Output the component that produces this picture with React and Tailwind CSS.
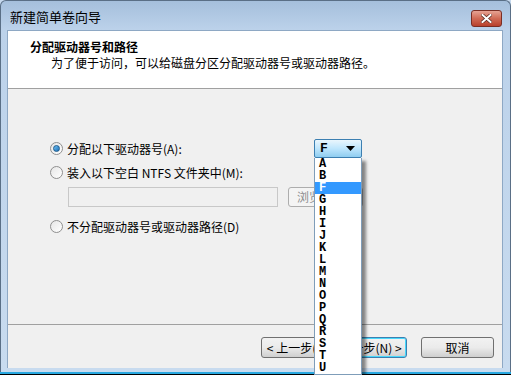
const letters = ["A", "B", "F", "G", "H", "I", "J", "K", "L", "M", "N", "O", "P", "Q", "R", "S", "T", "U"];

function Radio({ checked }) {
    return (
        <span className="relative flex h-[13px] w-[13px] items-center justify-center rounded-full border border-[#8f8f8f] bg-gradient-to-br from-[#e6e6e6] to-[#ffffff]">
            {checked && (
                <span className="h-[7px] w-[7px] rounded-full border border-[#1d5a8a] bg-gradient-to-br from-[#6cc0f5] to-[#1a6fb5]" />
            )}
        </span>
    );
}

function Button({ children, primary, className = "" }) {
    return (
        <div
            className={`flex h-[21px] w-[73px] items-center justify-center rounded-[3px] border bg-gradient-to-b from-[#f2f2f2] via-[#ebebeb] to-[#cfcfcf] text-[12px] text-black ${
                primary ? "border-[#3c7fb1] shadow-[inset_0_0_0_1px_#48d8fb]" : "border-[#707070]"
            } ${className}`}
        >
            {children}
        </div>
    );
}

export default function App() {
    return (
        <div
            className="flex h-[375px] w-[511px] flex-col overflow-hidden bg-[#c6d9ee] text-[12px] text-black"
            style={{ fontFamily: '"Noto Sans CJK SC", "Liberation Sans", sans-serif' }}
        >
            {/* title bar */}
            <div className="flex h-[30px] items-start justify-between rounded-t-[6px] border border-b-0 border-[#5a6f86] bg-gradient-to-b from-[#a5bfdc] to-[#bcd2ea] pl-[9px] pr-[8px]">
                <span className="mt-[8px] text-[13px] leading-[16px] text-black">新建简单卷向导</span>
                <div className="mt-[9px] flex h-[17px] w-[31px] items-center justify-center rounded-[3px] border border-[#7a2e24] bg-gradient-to-b from-[#e6a394] via-[#d06a55] to-[#b8402c]">
                    <svg width="11" height="9" viewBox="0 0 11 9">
                        <path d="M1.5 1 L9.5 8 M9.5 1 L1.5 8" stroke="#5a2a22" strokeWidth="3.4" strokeLinecap="square" />
                        <path d="M1.5 1 L9.5 8 M9.5 1 L1.5 8" stroke="#ffffff" strokeWidth="2" strokeLinecap="square" />
                    </svg>
                </div>
            </div>

            <div className="flex flex-1 border-l border-r border-[#5a6f86]">
                <div className="w-[6px] bg-gradient-to-b from-[#bcd2ea] to-[#c8dbef]" />
                <div className="flex flex-1 flex-col border border-b-0 border-[#8ea8c4]">
                    {/* header */}
                    <div className="h-[58px] border-b border-[#a0a0a0] bg-white pl-[22px] pt-[8px]">
                        <div className="text-[12px] font-bold leading-[16px]">分配驱动器号和路径</div>
                        <div className="pl-[21px] text-[12px] leading-[16px]">为了便于访问，可以给磁盘分区分配驱动器号或驱动器路径。</div>
                    </div>

                    {/* body */}
                    <div className="flex flex-1 flex-col bg-[#f0f0f0] pl-[42px] pt-[51px]">
                        <div className="flex h-[17px] items-center">
                            <div className="flex w-[264px] items-center gap-[4px]">
                                <Radio checked />
                                <span className="leading-[16px]">分配以下驱动器号(A):</span>
                            </div>
                            <div className="relative">
                                <div className="flex h-[19px] w-[48px] items-center justify-between rounded-[2px] border border-[#3c7fb1] bg-gradient-to-b from-[#eaf6fd] via-[#bee6fd] to-[#8fcdf0] pl-[5px] pr-[6px]">
                                    <span className="font-['Liberation_Mono'] text-[13px] font-bold leading-none">F</span>
                                    <svg width="9" height="5" viewBox="0 0 9 5">
                                        <path d="M0 0 H9 L4.5 5 Z" fill="#000" />
                                    </svg>
                                </div>
                                <div className="absolute left-0 top-[19px] z-10 w-[48px] border border-[#7f9db9] border-t-0 bg-white shadow-[4px_3px_3px_rgba(0,0,0,0.45)]">
                                    {letters.map((l) => (
                                        <div
                                            key={l}
                                            className={`flex h-[12px] items-center overflow-hidden pl-[4px] font-['Liberation_Mono'] text-[12px] font-bold leading-[10px] ${
                                                l === "F" ? "bg-[#3399ff] text-white" : "text-black"
                                            }`}
                                        >
                                            {l}
                                        </div>
                                    ))}
                                </div>
                            </div>
                        </div>

                        <div className="mt-[7px] flex h-[17px] items-center gap-[4px]">
                            <Radio />
                            <span className="leading-[16px]">装入以下空白 NTFS 文件夹中(M):</span>
                        </div>

                        <div className="mt-[6px] flex items-center pl-[18px]">
                            <div className="h-[20px] w-[210px] border border-[#c8c8c8] bg-[#f0f0f0]" />
                            <div className="ml-[10px] flex h-[20px] w-[75px] items-center rounded-[3px] border border-[#adadad] bg-[#f4f4f4] pl-[8px] text-[#8c8c8c]">
                                浏览(R)...
                            </div>
                        </div>

                        <div className="mt-[11px] flex h-[17px] items-center gap-[4px]">
                            <Radio />
                            <span className="leading-[16px]">不分配驱动器号或驱动器路径(D)</span>
                        </div>
                    </div>

                    {/* footer */}
                    <div className="flex h-[44px] justify-end border-t border-[#a0a0a0] bg-[#f0f0f0] pr-[8px] pt-[12px]">
                        <Button>&lt; 上一步(B)</Button>
                        <Button primary>下一步(N) &gt;</Button>
                        <Button className="ml-[14px]">取消</Button>
                    </div>
                </div>
                <div className="w-[7px] bg-gradient-to-b from-[#bcd2ea] to-[#c8dbef]" />
            </div>

            {/* bottom frame */}
            <div className="h-[4px] border-l border-r border-[#5a6f86] bg-[#c8dbef]" />
            <div className="h-[2px] bg-[#29a8e0]" />
            <div className="h-[1px] bg-black" />
        </div>
    );
}
